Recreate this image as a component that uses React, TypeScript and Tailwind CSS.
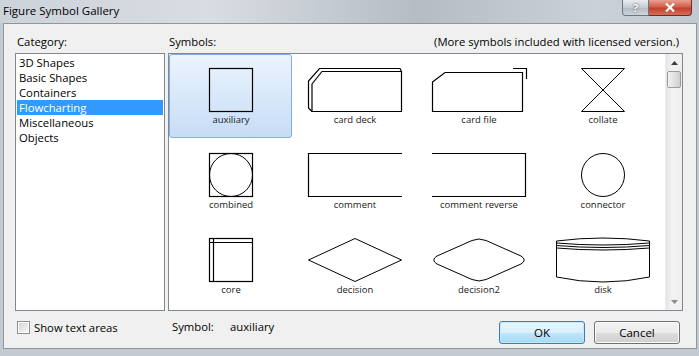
import React from 'react';

// Figure Symbol Gallery dialog (Win7 style)

const categories = ['3D Shapes', 'Basic Shapes', 'Containers', 'Flowcharting', 'Miscellaneous', 'Objects'];

const ln = { fill: 'none', stroke: '#000', strokeWidth: 1.2 } as const;

function Icon({ w, children }: { w: number; children: React.ReactNode }) {
  return (
    <svg width={w + 2} height={46} viewBox={`-1 -1 ${w + 2} 46`} className="block">
      {children}
    </svg>
  );
}

const symbols: { name: string; w: number; draw: React.ReactNode }[] = [
  { name: 'auxiliary', w: 44, draw: <rect x={0.5} y={0.5} width={43} height={43} {...ln} /> },
  {
    name: 'card deck',
    w: 94,
    draw: (
      <>
        <path d="M4 16 L14 3.5 L93.5 3.5 L93.5 43.5 L4 43.5 Z" {...ln} />
        <path d="M4 43.5 L0.5 40 L0.5 13 L11.5 0.5 L92 0.5 L93.5 3.5" {...ln} />
      </>
    ),
  },
  {
    name: 'card file',
    w: 95,
    draw: (
      <>
        <path d="M0.5 14 L13 4.5 L90.5 4.5 L90.5 43.5 L0.5 43.5 Z" {...ln} />
        <path d="M81 0.5 L94.5 0.5 L94.5 11" {...ln} />
      </>
    ),
  },
  { name: 'collate', w: 44, draw: <path d="M0.5 0.5 L43.5 0.5 L0.5 43.5 L43.5 43.5 Z" {...ln} strokeWidth={1} /> },
  {
    name: 'combined',
    w: 44,
    draw: (
      <>
        <rect x={0.5} y={0.5} width={43} height={43} {...ln} />
        <circle cx={22} cy={22} r={21.5} {...ln} strokeWidth={1} />
      </>
    ),
  },
  { name: 'comment', w: 94, draw: <path d="M94 0.5 L0.5 0.5 L0.5 43.5 L94 43.5" {...ln} /> },
  { name: 'comment reverse', w: 94, draw: <path d="M0 0.5 L93.5 0.5 L93.5 43.5 L0 43.5" {...ln} /> },
  { name: 'connector', w: 44, draw: <circle cx={22} cy={22} r={21.5} {...ln} strokeWidth={1} /> },
  {
    name: 'core',
    w: 44,
    draw: (
      <>
        <rect x={0.5} y={0.5} width={43} height={43} {...ln} />
        <path d="M4.5 0.5 L4.5 43.5 M0.5 4.5 L43.5 4.5" {...ln} />
      </>
    ),
  },
  { name: 'decision', w: 94, draw: <path d="M47 0.5 L93.5 22 L47 43.5 L0.5 22 Z" {...ln} strokeWidth={1} /> },
  {
    name: 'decision2',
    w: 94,
    draw: (
      <path
        d="M40 2.5 Q47 -0.5 54 2.5 L89 18 Q95.5 22 89 26 L54 41.5 Q47 44.5 40 41.5 L5 26 Q-1.5 22 5 18 Z"
        {...ln}
        strokeWidth={1}
      />
    ),
  },
  {
    name: 'disk',
    w: 94,
    draw: (
      <>
        <path d="M0.5 3 Q47 -3 93.5 3" {...ln} strokeWidth={1} />
        <path d="M0.5 5 Q47 9 93.5 5 M0.5 7.5 Q47 11.5 93.5 7.5 M0.5 10 Q47 14 93.5 10" {...ln} strokeWidth={1} />
        <path d="M0.5 3 L0.5 39 Q47 49 93.5 39 L93.5 3" {...ln} strokeWidth={1} />
      </>
    ),
  },
];

function Cell({ name, w, draw, selected }: { name: string; w: number; draw: React.ReactNode; selected?: boolean }) {
  return (
    <div className="relative h-[85px] w-[124px]">
      {selected && (
        <div className="absolute left-0 top-0 h-[84px] w-[123px] rounded-[3px] border border-[#84acdd] bg-[linear-gradient(180deg,#ebf4fd,#c6ddf6)]" />
      )}
      <div className="relative flex flex-col items-center pt-[13px]">
        <Icon w={w}>{draw}</Icon>
        <div className="mt-[1px] text-[9.5px] leading-[12px] text-[#1a1a1a]">{name}</div>
      </div>
    </div>
  );
}

function Scrollbar() {
  return (
    <div className="flex w-[17px] flex-col border-l border-[#ececec] bg-[linear-gradient(90deg,#e5e5e5,#f3f3f3_40%,#eeeeee)]">
      <div className="flex h-[17px] items-center justify-center">
        <svg width="7" height="4" viewBox="0 0 7 4"><path d="M0 4 L3.5 0 L7 4 Z" fill="#3c3c3c" /></svg>
      </div>
      <div className="mx-[1px] h-[17px] rounded-[2px] border border-[#9b9b9b] bg-[linear-gradient(90deg,#f2f2f2,#e2e2e2_50%,#cfcfcf)]" />
      <div className="flex-1" />
      <div className="flex h-[17px] items-center justify-center">
        <svg width="7" height="4" viewBox="0 0 7 4"><path d="M0 0 L3.5 4 L7 0 Z" fill="#8a8a8a" /></svg>
      </div>
    </div>
  );
}

function Button({ label, focused }: { label: string; focused?: boolean }) {
  return (
    <button
      className={
        focused
          ? 'h-[23px] w-[86px] rounded-[3px] border border-[#3c7fb1] bg-[linear-gradient(180deg,#eaf6fd_0%,#d9f0fc_50%,#bee6fd_51%,#a7d9f5_100%)] text-[11.5px] text-black shadow-[inset_0_0_0_1px_#c7e6f8]'
          : 'h-[23px] w-[86px] rounded-[3px] border border-[#707070] bg-[linear-gradient(180deg,#f2f2f2_0%,#ebebeb_50%,#dddddd_51%,#cfcfcf_100%)] text-[11.5px] text-black shadow-[inset_0_0_0_1px_#fcfcfc]'
      }
    >
      {label}
    </button>
  );
}

export default function App() {
  return (
    <div className="flex h-[356px] w-[699px] flex-col overflow-hidden bg-[#c4cad1] font-['Open_Sans',sans-serif] text-[11.3px] text-black">
      {/* title bar */}
      <div className="flex h-[23px] shrink-0 items-start bg-[linear-gradient(90deg,#cdd3da_0%,#d8dde3_30%,#b6bcc4_60%,#cbd1d8_85%,#c2c8cf_100%)]">
        <div className="pl-[3px] pt-[3px] text-[11.5px] leading-[16px]">Figure Symbol Gallery</div>
        <div className="ml-auto mr-[7px] flex">
          <div className="flex h-[16px] w-[27px] items-center justify-center rounded-bl-[4px] border border-t-0 border-[#6d747c] bg-[linear-gradient(180deg,#e9edf1,#c4cbd3_50%,#b3bac3_51%,#cdd4db)] text-[11px] font-bold leading-none text-white [text-shadow:0_0_2px_#333]">
            ?
          </div>
          <div className="flex h-[16px] w-[43px] items-center justify-center rounded-br-[4px] border border-l-0 border-t-0 border-[#6e2a24] bg-[linear-gradient(180deg,#e8a08f,#d1604d_45%,#c3402c_55%,#d4705a)]">
            <svg width="10" height="9" viewBox="0 0 10 9">
              <path d="M1 0.5 L9 8.5 M9 0.5 L1 8.5" stroke="#fff" strokeWidth="2.2" />
            </svg>
          </div>
        </div>
      </div>

      {/* client area */}
      <div className="ml-[3px] mr-[2px] h-[326px] border border-[#8f969f] bg-[#f0f0f0]">
        <div className="pl-[11px] pt-[10px]">
          <div className="flex gap-[3px]">
            <div className="flex w-[150px] flex-col">
              <div className="h-[19px] pl-[2px] leading-[15px]">Category:</div>
              <div className="h-[258px] border border-[#828790] bg-white p-[1px]">
                {categories.map((c) => (
                  <div
                    key={c}
                    className={
                      c === 'Flowcharting'
                        ? 'h-[15px] bg-[#3399ff] pl-[2px] leading-[15px] text-white'
                        : 'h-[15px] pl-[2px] leading-[15px]'
                    }
                  >
                    {c}
                  </div>
                ))}
              </div>
            </div>
            <div className="flex w-[515px] flex-col">
              <div className="flex h-[19px] justify-between leading-[15px]">
                <span className="pl-[1px]">Symbols:</span>
                <span className="pr-[4px]">(More symbols included with licensed version.)</span>
              </div>
              <div className="flex h-[258px] border border-[#828790] bg-white">
                <div className="grid w-[496px] grid-cols-4 content-start">
                  {symbols.map((s, i) => (
                    <Cell key={s.name} name={s.name} w={s.w} draw={s.draw} selected={i === 0} />
                  ))}
                </div>
                <Scrollbar />
              </div>
            </div>
          </div>

          {/* bottom row */}
          <div className="mt-[10px] flex h-[23px] items-start">
            <div className="flex w-[153px] items-center gap-[4px] pl-[2px] leading-[13px]">
              <div className="h-[13px] w-[13px] border border-[#8e8f8f] bg-white p-[1px]">
                <div className="h-full w-full bg-[linear-gradient(135deg,#d6d6d6,#f6f6f6)]" />
              </div>
              <span>Show text areas</span>
            </div>
            <div className="flex pl-[4px] leading-[12px]">
              <span className="w-[58px]">Symbol:</span>
              <span>auxiliary</span>
            </div>
            <div className="ml-auto mr-[16px] flex gap-[9px]">
              <Button label="OK" focused />
              <Button label="Cancel" />
            </div>
          </div>
        </div>
      </div>
    </div>
  );
}
